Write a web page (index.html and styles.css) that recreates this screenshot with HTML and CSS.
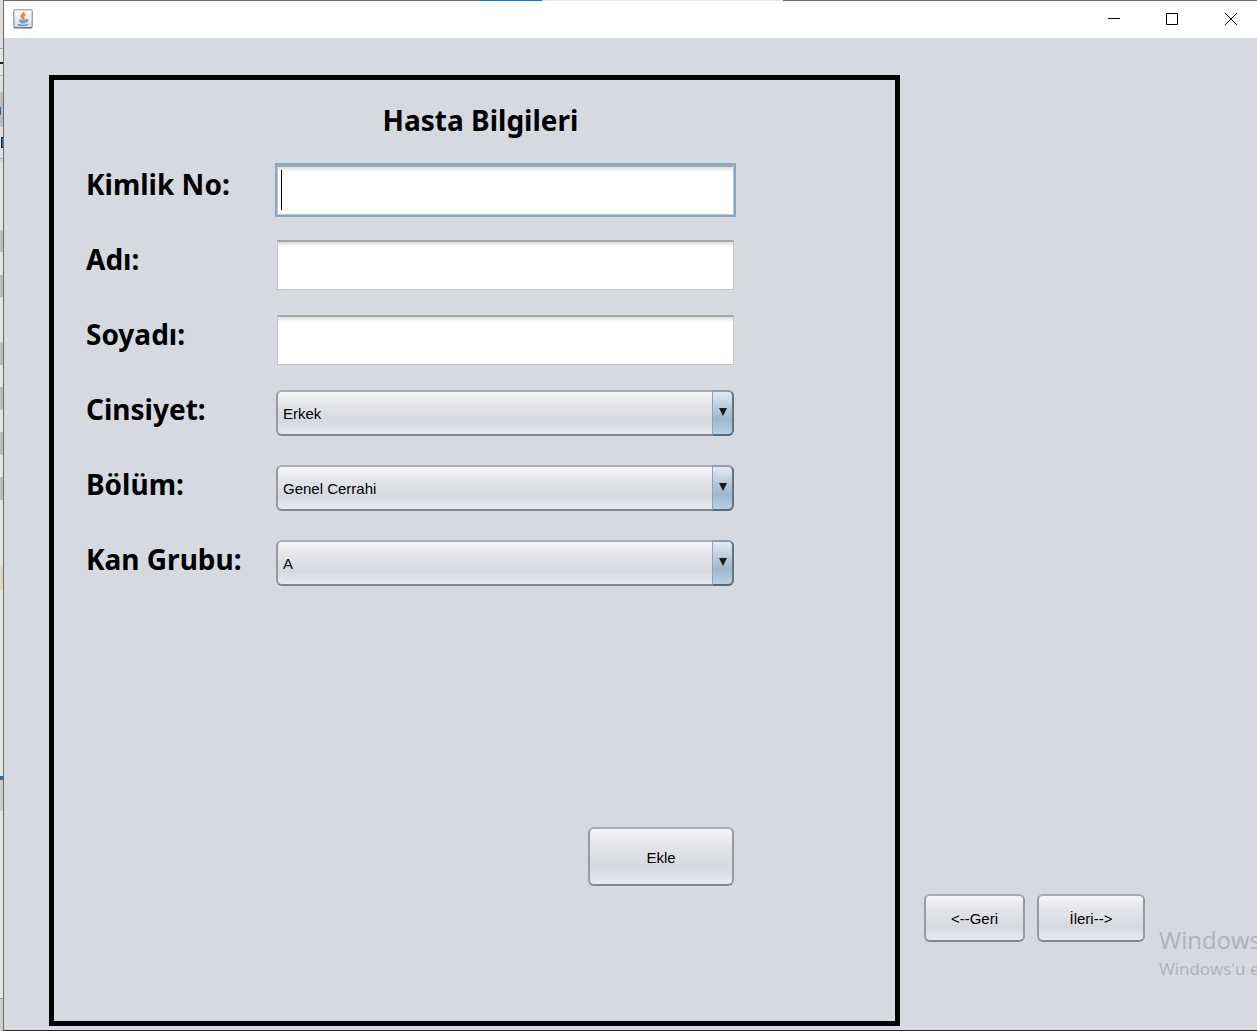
FILE: index.html
```html
<!DOCTYPE html>
<html lang="tr">
<head>
<meta charset="utf-8">
<meta name="viewport" content="width=device-width, initial-scale=1">
<title>Hasta Bilgileri</title>
<link rel="stylesheet" href="styles.css">
</head>
<body>
<div class="backdrop" aria-hidden="true"></div>
<div class="window">
  <header class="titlebar">
    <svg class="app-icon" width="20" height="20" viewBox="0 0 20 20" aria-hidden="true">
      <defs><linearGradient id="tile" x1="0" y1="0" x2="0" y2="1"><stop offset="0" stop-color="#fdfdfd"/><stop offset="1" stop-color="#d5dde3"/></linearGradient></defs>
      <rect x=".75" y=".75" width="18.5" height="18" rx="1.5" fill="url(#tile)" stroke="#8798a6" stroke-width="1.2"/>
      <path d="M1 18.8h18" stroke="#4d7187" stroke-width="1.2"/>
      <path d="M10.800 3c.8 1.800-3.200 2.700-2.600 4.600.2 1 1.400 1.400 1.200 2.200M12.300 5.600c-1.600.5-2.500 1.400-1.700 2.500.4.6.2 1.200-.4 1.700" fill="none" stroke="#e8833a" stroke-width="1.700"/>
      <path d="M6 10.500h7v1.500q-.3 2-1.500 2.500H7.800Q6.300 13.800 6 10.500z" fill="#7ea0b8"/>
      <path d="M13 10.800c2.200-.5 2 1.900-.6 2.300M4.800 15.600c2.500 1.200 8 1.200 10.400-.3" fill="none" stroke="#668ca8" stroke-width="1.300"/>
    </svg>
    <div class="window-controls">
      <button class="control" type="button" aria-label="Simge durumuna küçült"><svg width="12" height="12" viewBox="0 0 12 12"><path d="M0 5.500h12"/></svg></button>
      <button class="control" type="button" aria-label="Ekranı kapla"><svg width="12" height="12" viewBox="0 0 12 12"><path d="M.5.5h11v11H.5z"/></svg></button>
      <button class="control" type="button" aria-label="Kapat"><svg width="12" height="12" viewBox="0 0 12 12"><path d="M0 0l12 12M12 0L0 12"/></svg></button>
    </div>
  </header>
  <main class="content">
    <form class="panel">
      <h1 class="heading">Hasta Bilgileri</h1>
      <div class="fields">
        <label class="label" for="kimlik">Kimlik No:</label>
        <div class="field field-active"><input class="input" id="kimlik" type="text"><span class="caret"></span></div>
        <label class="label" for="adi">Adı:</label>
        <div class="field"><input class="input" id="adi" type="text"></div>
        <label class="label" for="soyadi">Soyadı:</label>
        <div class="field"><input class="input" id="soyadi" type="text"></div>
        <label class="label" for="cinsiyet">Cinsiyet:</label>
        <div class="combo">
          <select class="select" id="cinsiyet"><option>Erkek</option></select>
          <span class="arrow"><svg width="8" height="8" viewBox="0 0 8 8"><path d="M0 0h8L4 8z"/></svg></span>
        </div>
        <label class="label" for="bolum">Bölüm:</label>
        <div class="combo">
          <select class="select" id="bolum"><option>Genel Cerrahi</option></select>
          <span class="arrow"><svg width="8" height="8" viewBox="0 0 8 8"><path d="M0 0h8L4 8z"/></svg></span>
        </div>
        <label class="label" for="kan">Kan Grubu:</label>
        <div class="combo">
          <select class="select" id="kan"><option>A</option></select>
          <span class="arrow"><svg width="8" height="8" viewBox="0 0 8 8"><path d="M0 0h8L4 8z"/></svg></span>
        </div>
      </div>
      <button class="button button-add" type="button">Ekle</button>
    </form>
    <nav class="pager">
      <button class="button button-back" type="button">&lt;--Geri</button>
      <button class="button button-next" type="button">İleri--&gt;</button>
    </nav>
  </main>
  <div class="watermark">
    <div class="watermark-title">Windows</div>
    <div class="watermark-text">Windows'u e</div>
  </div>
</div>
</body>
</html>
```
FILE: styles.css
```css
* { box-sizing: border-box; }

body {
  margin: 0;
  min-height: 100vh;
  display: flex;
  background: #d6d9e0;
  color: #000;
  font-family: "Liberation Sans", Arial, sans-serif;
  font-size: 15px;
}

/* Sliver of the application behind the window */
.backdrop {
  width: 3px;
  background:
    linear-gradient(#1c69b4, #1c69b4) 0 107px / 1px 8px no-repeat,
    linear-gradient(#222, #222) 0 62px / 3px 2px no-repeat,
    linear-gradient(#1478c4, #1478c4) 2px 138px / 1px 9px no-repeat,
    linear-gradient(#222, #222) 1px 137px / 2px 11px no-repeat,
    linear-gradient(#dedede 48px, #aaa 48px 49px, #e4e4e4 49px 75px, #aaa 75px 76px,
      #e0e0e0 76px 92px, #bfbdbb 92px 127px, #e0e0e0 127px 158px, #aaa 158px 159px,
      #d4d4d4 159px 162px, #e4e4e2 162px 230px, #bfbdbb 230px 252px, #e4e4e2 252px 275px,
      #bfbdbb 275px 297px, #e4e4e2 297px 342px, #bfbdbb 342px 365px, #e4e4e2 365px 387px,
      #bfbdbb 387px 410px, #e4e4e2 410px 432px, #bfbdbb 432px 455px, #e4e4e2 455px 477px,
      #bfbdbb 477px 500px, #e4e4e2 500px 567px, #dcd7bf 567px 590px, #e4e4e2 590px 776px,
      #2d6ca7 776px 780px, #cecccb 780px 811px, #e4e4e2 811px 998px, #999 998px 999px, #d0ceca 999px);
}

.window {
  position: relative;
  flex: 1;
  min-width: 0;
  display: flex;
  flex-direction: column;
  overflow: hidden;
  border-left: 1px solid #6b6b6b;
  border-bottom: 1px solid #22262f;
}

.titlebar {
  display: flex;
  justify-content: space-between;
  height: 38px;
  padding-left: 9px;
  background:
    linear-gradient(90deg, #6b6b6b 478px, #0078d7 478px 538px, #e5e5e5 538px 779px, #6b6b6b 779px) 0 0 / 100% 1px no-repeat,
    #fff;
}
.app-icon { align-self: center; }
.window-controls { display: flex; }
.control {
  width: 58px;
  padding: 0;
  border: 0;
  background: none;
  display: flex;
  align-items: center;
  justify-content: center;
}
.control:last-child { width: 56px; padding-left: 4px; }
.control svg { fill: none; stroke: #000; stroke-width: 1; }

.content {
  flex: 1;
  display: flex;
  padding: 37px 0 4px 45px;
}

.panel {
  flex: 1;
  min-width: 0;
  display: flex;
  flex-direction: column;
  padding: 20px 161px 135px 32px;
  border: 5px solid #000;
}
.heading, .label {
  font-family: "Noto Sans", "Segoe UI", sans-serif;
  font-size: 28px;
  font-weight: 700;
  line-height: 40px;
  margin: 0;
}
.label { line-height: 38px; }
/* Centred across the panel, beyond the field column */
.heading { margin: 0 -141px 25px 0; text-align: center; }

.fields {
  display: grid;
  grid-template-columns: 190px minmax(0, 1fr);
  grid-auto-rows: 50px;
  row-gap: 25px;
}
.field { position: relative; padding-left: 1px; }
.input {
  display: block;
  width: 100%;
  height: 50px;
  padding: 0 6px;
  font: inherit;
  background: linear-gradient(#dcdcdc, #fff 5px);
  border: 1px solid #c4c5c9;
  border-top: 2px solid #a6a7aa;
  border-radius: 0;
  outline: none;
}
.field-active .input {
  caret-color: transparent;
  box-shadow: 0 0 0 2px #80a9d0;
}
.caret {
  position: absolute;
  left: 5px;
  top: 5px;
  width: 1px;
  height: 40px;
  background: #000;
}

.combo { position: relative; height: 46px; }
.select, .button {
  font: inherit;
  color: #000;
  border: 2px solid;
  border-color: #a9acb1 #96999e #83868c;
  border-radius: 6px;
  background: linear-gradient(#f5f5f7, #e4e5e9 30%, #d6d9df 70%, #e4e9f2);
}
.select {
  appearance: none;
  display: block;
  width: 100%;
  height: 46px;
  padding: 0 28px 0 5px;
}
.arrow {
  position: absolute;
  top: 0;
  right: 0;
  width: 22px;
  height: 46px;
  display: flex;
  justify-content: center;
  padding-top: 16px;
  border: 2px solid;
  border-color: #8b9cae #5d7589 #526a7e #8ca3b8;
  border-left-width: 1px;
  border-radius: 0 6px 6px 0;
  background: linear-gradient(#e3ebf3, #b4c7d8 40%, #9fb6cb 65%, #b9cfe3);
  pointer-events: none;
}
.arrow svg { fill: #1a1a1a; }

.button { padding: 2px 0 0; }
.button-add {
  align-self: flex-end;
  width: 146px;
  height: 59px;
  margin-top: auto;
}

.pager {
  flex: 0 0 357px;
  display: flex;
  align-items: flex-end;
  gap: 12px;
  padding: 0 0 84px 24px;
}
.pager .button { height: 48px; padding: 0; }
.button-back { width: 101px; }
.button-next { width: 108px; }

/* Desktop notice that floats over the corner of the window */
.watermark {
  position: absolute;
  left: calc(100% - 98px);
  bottom: 48px;
  color: #b0b1b4;
  font-family: "Open Sans", "Segoe UI", sans-serif;
  white-space: nowrap;
  pointer-events: none;
}
.watermark-title { font-size: 24px; line-height: 32px; }
.watermark-text { font-size: 17px; line-height: 26px; }
```
